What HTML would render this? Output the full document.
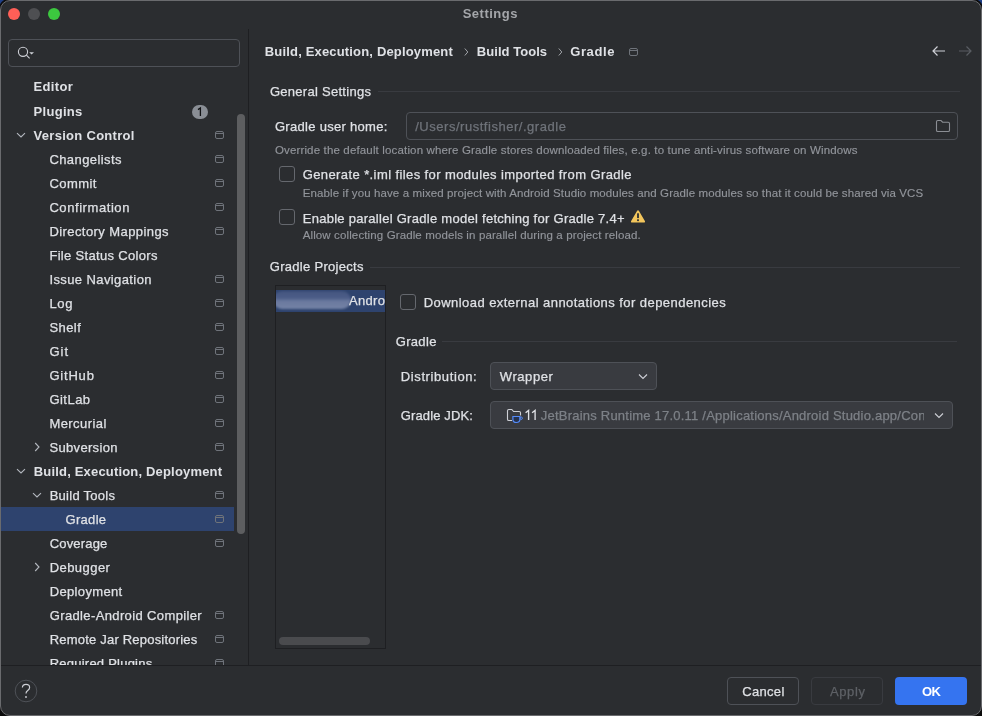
<!DOCTYPE html>
<html><head><meta charset="utf-8">
<style>
html,body{margin:0;padding:0;width:982px;height:716px;overflow:hidden;background:#1d3a78;}
body{position:relative;font-family:"Liberation Sans", sans-serif;}
.ab{position:absolute;display:block;}
.tx{position:absolute;white-space:nowrap;line-height:16px;font-family:"Liberation Sans", sans-serif;-webkit-font-smoothing:antialiased;-webkit-text-stroke:0.25px currentColor;}
body{will-change:transform;}
#win{position:absolute;left:0;top:0;width:980px;height:714px;border:1px solid #6A6B6E;border-radius:10px;background:#2B2D30;overflow:hidden;box-shadow:0 0 0 1.5px #0c0c0c;}
</style></head><body>
<!-- desktop corners -->
<div class="ab" style="left:0;top:0;width:982px;height:358px;background:#1f3f86"></div>
<div class="ab" style="left:0;top:358px;width:982px;height:358px;background:#0a0a0a"></div>
<div id="win"></div>
<!-- traffic lights -->
<div class="ab" style="left:8px;top:8px;width:12px;height:12px;border-radius:50%;background:#FF5F57"></div>
<div class="ab" style="left:28px;top:8px;width:12px;height:12px;border-radius:50%;background:#4E4F52"></div>
<div class="ab" style="left:48px;top:8px;width:12px;height:12px;border-radius:50%;background:#3CC83F"></div>

<!-- search -->
<div class="ab" style="left:8px;top:39px;width:230px;height:26px;border:1px solid #4E5157;border-radius:4px;"></div>
<svg class="ab" style="left:14px;top:42px" width="24" height="20" viewBox="0 0 24 20"><circle cx="9" cy="9.8" r="4.6" fill="none" stroke="#CED0D6" stroke-width="1.1"/><line x1="12.4" y1="13.2" x2="15.6" y2="16.4" stroke="#CED0D6" stroke-width="1.1"/><path d="M15.2 10.2 L20 10.2 L17.6 12.6 Z" fill="#CED0D6"/></svg>

<!-- divider -->
<div class="ab" style="left:248px;top:29px;width:1px;height:636px;background:#1E1F22"></div>
<!-- tree scrollbar -->
<div class="ab" style="left:237px;top:114px;width:8px;height:420px;border-radius:4px;background:#5D5E60"></div>
<!-- selection -->
<div class="ab" style="left:1px;top:507px;width:233px;height:24px;background:#2E436E"></div>
<!-- badge -->
<svg class="ab" style="left:192px;top:105px" width="16" height="14" viewBox="0 0 16 14"><rect x="0" y="0" width="16" height="14" rx="7" fill="#8A8E95"/><path d="M6 4.6 L8.4 3 L8.4 11" fill="none" stroke="#111214" stroke-width="1.3"/></svg>

<div class="ab" style="left:0;top:0;width:248px;height:665px;overflow:hidden"><svg class="ab" style="left:15.899999999999999px;top:130px" width="10" height="10" viewBox="0 0 10 10"><path d="M1 3.2 L5 7 L9 3.2" fill="none" stroke="#B4B8BF" stroke-width="1.1"/></svg>
<svg class="ab" style="left:215px;top:131px" width="9" height="8" viewBox="0 0 9 8"><rect x="0.5" y="0.5" width="8" height="7" rx="1.5" fill="none" stroke="#6F737A" stroke-width="1"/><line x1="0.5" y1="2.5" x2="8.5" y2="2.5" stroke="#6F737A" stroke-width="1"/></svg>
<svg class="ab" style="left:215px;top:155px" width="9" height="8" viewBox="0 0 9 8"><rect x="0.5" y="0.5" width="8" height="7" rx="1.5" fill="none" stroke="#6F737A" stroke-width="1"/><line x1="0.5" y1="2.5" x2="8.5" y2="2.5" stroke="#6F737A" stroke-width="1"/></svg>
<svg class="ab" style="left:215px;top:179px" width="9" height="8" viewBox="0 0 9 8"><rect x="0.5" y="0.5" width="8" height="7" rx="1.5" fill="none" stroke="#6F737A" stroke-width="1"/><line x1="0.5" y1="2.5" x2="8.5" y2="2.5" stroke="#6F737A" stroke-width="1"/></svg>
<svg class="ab" style="left:215px;top:203px" width="9" height="8" viewBox="0 0 9 8"><rect x="0.5" y="0.5" width="8" height="7" rx="1.5" fill="none" stroke="#6F737A" stroke-width="1"/><line x1="0.5" y1="2.5" x2="8.5" y2="2.5" stroke="#6F737A" stroke-width="1"/></svg>
<svg class="ab" style="left:215px;top:227px" width="9" height="8" viewBox="0 0 9 8"><rect x="0.5" y="0.5" width="8" height="7" rx="1.5" fill="none" stroke="#6F737A" stroke-width="1"/><line x1="0.5" y1="2.5" x2="8.5" y2="2.5" stroke="#6F737A" stroke-width="1"/></svg>
<svg class="ab" style="left:215px;top:275px" width="9" height="8" viewBox="0 0 9 8"><rect x="0.5" y="0.5" width="8" height="7" rx="1.5" fill="none" stroke="#6F737A" stroke-width="1"/><line x1="0.5" y1="2.5" x2="8.5" y2="2.5" stroke="#6F737A" stroke-width="1"/></svg>
<svg class="ab" style="left:215px;top:299px" width="9" height="8" viewBox="0 0 9 8"><rect x="0.5" y="0.5" width="8" height="7" rx="1.5" fill="none" stroke="#6F737A" stroke-width="1"/><line x1="0.5" y1="2.5" x2="8.5" y2="2.5" stroke="#6F737A" stroke-width="1"/></svg>
<svg class="ab" style="left:215px;top:323px" width="9" height="8" viewBox="0 0 9 8"><rect x="0.5" y="0.5" width="8" height="7" rx="1.5" fill="none" stroke="#6F737A" stroke-width="1"/><line x1="0.5" y1="2.5" x2="8.5" y2="2.5" stroke="#6F737A" stroke-width="1"/></svg>
<svg class="ab" style="left:215px;top:347px" width="9" height="8" viewBox="0 0 9 8"><rect x="0.5" y="0.5" width="8" height="7" rx="1.5" fill="none" stroke="#6F737A" stroke-width="1"/><line x1="0.5" y1="2.5" x2="8.5" y2="2.5" stroke="#6F737A" stroke-width="1"/></svg>
<svg class="ab" style="left:215px;top:371px" width="9" height="8" viewBox="0 0 9 8"><rect x="0.5" y="0.5" width="8" height="7" rx="1.5" fill="none" stroke="#6F737A" stroke-width="1"/><line x1="0.5" y1="2.5" x2="8.5" y2="2.5" stroke="#6F737A" stroke-width="1"/></svg>
<svg class="ab" style="left:215px;top:395px" width="9" height="8" viewBox="0 0 9 8"><rect x="0.5" y="0.5" width="8" height="7" rx="1.5" fill="none" stroke="#6F737A" stroke-width="1"/><line x1="0.5" y1="2.5" x2="8.5" y2="2.5" stroke="#6F737A" stroke-width="1"/></svg>
<svg class="ab" style="left:215px;top:419px" width="9" height="8" viewBox="0 0 9 8"><rect x="0.5" y="0.5" width="8" height="7" rx="1.5" fill="none" stroke="#6F737A" stroke-width="1"/><line x1="0.5" y1="2.5" x2="8.5" y2="2.5" stroke="#6F737A" stroke-width="1"/></svg>
<svg class="ab" style="left:31.700000000000003px;top:442px" width="10" height="10" viewBox="0 0 10 10"><path d="M3.2 1 L7 5 L3.2 9" fill="none" stroke="#B4B8BF" stroke-width="1.1"/></svg>
<svg class="ab" style="left:215px;top:443px" width="9" height="8" viewBox="0 0 9 8"><rect x="0.5" y="0.5" width="8" height="7" rx="1.5" fill="none" stroke="#6F737A" stroke-width="1"/><line x1="0.5" y1="2.5" x2="8.5" y2="2.5" stroke="#6F737A" stroke-width="1"/></svg>
<svg class="ab" style="left:16.1px;top:466px" width="10" height="10" viewBox="0 0 10 10"><path d="M1 3.2 L5 7 L9 3.2" fill="none" stroke="#B4B8BF" stroke-width="1.1"/></svg>
<svg class="ab" style="left:32.0px;top:490px" width="10" height="10" viewBox="0 0 10 10"><path d="M1 3.2 L5 7 L9 3.2" fill="none" stroke="#B4B8BF" stroke-width="1.1"/></svg>
<svg class="ab" style="left:215px;top:491px" width="9" height="8" viewBox="0 0 9 8"><rect x="0.5" y="0.5" width="8" height="7" rx="1.5" fill="none" stroke="#6F737A" stroke-width="1"/><line x1="0.5" y1="2.5" x2="8.5" y2="2.5" stroke="#6F737A" stroke-width="1"/></svg>
<svg class="ab" style="left:215px;top:515px" width="9" height="8" viewBox="0 0 9 8"><rect x="0.5" y="0.5" width="8" height="7" rx="1.5" fill="none" stroke="#6F737A" stroke-width="1"/><line x1="0.5" y1="2.5" x2="8.5" y2="2.5" stroke="#6F737A" stroke-width="1"/></svg>
<svg class="ab" style="left:215px;top:539px" width="9" height="8" viewBox="0 0 9 8"><rect x="0.5" y="0.5" width="8" height="7" rx="1.5" fill="none" stroke="#6F737A" stroke-width="1"/><line x1="0.5" y1="2.5" x2="8.5" y2="2.5" stroke="#6F737A" stroke-width="1"/></svg>
<svg class="ab" style="left:32.0px;top:562px" width="10" height="10" viewBox="0 0 10 10"><path d="M3.2 1 L7 5 L3.2 9" fill="none" stroke="#B4B8BF" stroke-width="1.1"/></svg>
<svg class="ab" style="left:215px;top:611px" width="9" height="8" viewBox="0 0 9 8"><rect x="0.5" y="0.5" width="8" height="7" rx="1.5" fill="none" stroke="#6F737A" stroke-width="1"/><line x1="0.5" y1="2.5" x2="8.5" y2="2.5" stroke="#6F737A" stroke-width="1"/></svg>
<svg class="ab" style="left:215px;top:635px" width="9" height="8" viewBox="0 0 9 8"><rect x="0.5" y="0.5" width="8" height="7" rx="1.5" fill="none" stroke="#6F737A" stroke-width="1"/><line x1="0.5" y1="2.5" x2="8.5" y2="2.5" stroke="#6F737A" stroke-width="1"/></svg>
<svg class="ab" style="left:215px;top:659px" width="9" height="8" viewBox="0 0 9 8"><rect x="0.5" y="0.5" width="8" height="7" rx="1.5" fill="none" stroke="#6F737A" stroke-width="1"/><line x1="0.5" y1="2.5" x2="8.5" y2="2.5" stroke="#6F737A" stroke-width="1"/></svg><div class="tx" style="left:33.60px;top:78.80px;font-size:13px;color:#DFE1E5;font-weight:bold;-webkit-text-stroke:0;letter-spacing:0.329px;">Editor</div>
<div class="tx" style="left:33.60px;top:103.80px;font-size:13px;color:#DFE1E5;font-weight:bold;-webkit-text-stroke:0;letter-spacing:0.292px;">Plugins</div>
<div class="tx" style="left:33.60px;top:127.80px;font-size:13px;color:#DFE1E5;font-weight:bold;-webkit-text-stroke:0;letter-spacing:0.286px;">Version Control</div>
<div class="tx" style="left:49.40px;top:151.80px;font-size:13px;color:#DFE1E5;letter-spacing:0.427px;">Changelists</div>
<div class="tx" style="left:49.40px;top:175.80px;font-size:13px;color:#DFE1E5;letter-spacing:0.445px;">Commit</div>
<div class="tx" style="left:49.40px;top:199.80px;font-size:13px;color:#DFE1E5;letter-spacing:0.573px;">Confirmation</div>
<div class="tx" style="left:49.40px;top:223.80px;font-size:13px;color:#DFE1E5;letter-spacing:0.424px;">Directory Mappings</div>
<div class="tx" style="left:49.40px;top:247.80px;font-size:13px;color:#DFE1E5;letter-spacing:0.324px;">File Status Colors</div>
<div class="tx" style="left:49.40px;top:271.80px;font-size:13px;color:#DFE1E5;letter-spacing:0.399px;">Issue Navigation</div>
<div class="tx" style="left:49.40px;top:295.80px;font-size:13px;color:#DFE1E5;letter-spacing:0.705px;">Log</div>
<div class="tx" style="left:49.40px;top:319.80px;font-size:13px;color:#DFE1E5;letter-spacing:0.442px;">Shelf</div>
<div class="tx" style="left:49.40px;top:343.80px;font-size:13px;color:#DFE1E5;letter-spacing:0.994px;">Git</div>
<div class="tx" style="left:49.40px;top:367.80px;font-size:13px;color:#DFE1E5;letter-spacing:0.808px;">GitHub</div>
<div class="tx" style="left:49.40px;top:391.80px;font-size:13px;color:#DFE1E5;letter-spacing:0.480px;">GitLab</div>
<div class="tx" style="left:49.40px;top:415.80px;font-size:13px;color:#DFE1E5;letter-spacing:0.443px;">Mercurial</div>
<div class="tx" style="left:49.40px;top:439.80px;font-size:13px;color:#DFE1E5;letter-spacing:0.340px;">Subversion</div>
<div class="tx" style="left:33.80px;top:463.80px;font-size:13px;color:#DFE1E5;font-weight:bold;-webkit-text-stroke:0;letter-spacing:0.175px;">Build, Execution, Deployment</div>
<div class="tx" style="left:49.70px;top:487.80px;font-size:13px;color:#DFE1E5;letter-spacing:0.263px;">Build Tools</div>
<div class="tx" style="left:65.50px;top:511.80px;font-size:13px;color:#DFE1E5;letter-spacing:0.316px;">Gradle</div>
<div class="tx" style="left:49.70px;top:535.80px;font-size:13px;color:#DFE1E5;letter-spacing:0.176px;">Coverage</div>
<div class="tx" style="left:49.70px;top:559.80px;font-size:13px;color:#DFE1E5;letter-spacing:0.443px;">Debugger</div>
<div class="tx" style="left:49.70px;top:583.80px;font-size:13px;color:#DFE1E5;letter-spacing:0.348px;">Deployment</div>
<div class="tx" style="left:49.70px;top:607.80px;font-size:13px;color:#DFE1E5;letter-spacing:0.374px;">Gradle-Android Compiler</div>
<div class="tx" style="left:49.70px;top:631.80px;font-size:13px;color:#DFE1E5;letter-spacing:0.206px;">Remote Jar Repositories</div>
<div class="tx" style="left:49.70px;top:655.80px;font-size:13px;color:#DFE1E5;letter-spacing:0.233px;">Required Plugins</div></div>

<!-- breadcrumb separators -->
<svg class="ab" style="left:462px;top:47px" width="8" height="10" viewBox="0 0 8 10"><path d="M2.8 1.5 L5.8 5 L2.8 8.5" fill="none" stroke="#A0A3A8" stroke-width="1"/></svg>
<svg class="ab" style="left:556px;top:47px" width="8" height="10" viewBox="0 0 8 10"><path d="M2.8 1.5 L5.8 5 L2.8 8.5" fill="none" stroke="#A0A3A8" stroke-width="1"/></svg>
<svg class="ab" style="left:629px;top:48px" width="9" height="8" viewBox="0 0 9 8"><rect x="0.5" y="0.5" width="8" height="7" rx="1.5" fill="none" stroke="#6F737A"/><line x1="0.5" y1="2.5" x2="8.5" y2="2.5" stroke="#6F737A"/></svg>
<!-- nav arrows -->
<svg class="ab" style="left:931px;top:45px" width="16" height="12" viewBox="0 0 16 12"><path d="M6.5 1.5 L2 6 L6.5 10.5 M2 6 L14 6" fill="none" stroke="#CED0D6" stroke-width="1.2"/></svg>
<svg class="ab" style="left:957px;top:45px" width="16" height="12" viewBox="0 0 16 12"><path d="M9.5 1.5 L14 6 L9.5 10.5 M14 6 L2 6" fill="none" stroke="#5A5D63" stroke-width="1.2"/></svg>

<!-- General settings separator -->
<div class="ab" style="left:378px;top:91px;width:582px;height:1px;background:#393B40"></div>
<!-- text field -->
<div class="ab" style="left:406px;top:112px;width:550px;height:26px;border:1px solid #4E5157;border-radius:4px;"></div>
<svg class="ab" style="left:935px;top:119px" width="16" height="14" viewBox="0 0 16 14"><path d="M1.5 2.8 Q1.5 1.5 2.8 1.5 L6 1.5 L7.6 3.2 L13.2 3.2 Q14.5 3.2 14.5 4.5 L14.5 11.2 Q14.5 12.5 13.2 12.5 L2.8 12.5 Q1.5 12.5 1.5 11.2 Z" fill="none" stroke="#8B8E94" stroke-width="1.1"/></svg>

<!-- checkboxes -->
<div class="ab" style="left:279px;top:166px;width:14px;height:14px;border:1px solid #65686E;border-radius:3px;"></div>
<div class="ab" style="left:279px;top:209px;width:14px;height:14px;border:1px solid #65686E;border-radius:3px;"></div>
<!-- warning -->
<svg class="ab" style="left:630px;top:209px" width="16" height="15" viewBox="0 0 16 15"><path d="M8 1.2 Q8.6 1.2 9 1.9 L15 12.3 Q15.4 13.5 14.2 13.6 L1.8 13.6 Q0.6 13.5 1 12.3 L7 1.9 Q7.4 1.2 8 1.2 Z" fill="#F2C55C"/><rect x="7.1" y="4.3" width="1.8" height="4.8" fill="#2B2D30"/><rect x="7.1" y="10.3" width="1.8" height="1.8" fill="#2B2D30"/></svg>

<!-- Gradle Projects separator -->
<div class="ab" style="left:370px;top:267px;width:590px;height:1px;background:#393B40"></div>
<!-- list box -->
<div class="ab" style="left:275px;top:285px;width:109px;height:362px;border:1px solid #1E1F22;"></div>
<div class="ab" style="left:276px;top:290px;width:109px;height:22px;background:#2E436E;overflow:hidden;">
  <div class="ab" style="left:-3px;top:1px;width:78px;height:18px;border-radius:9px;background:linear-gradient(to bottom,#44557F 0%,#4C5D88 40%,#6A789E 55%,#7483A6 100%);filter:blur(0.8px)"></div>
  <div class="tx" style="left:73px;top:3px;font-size:13px;color:#DFE1E5;letter-spacing:0.3px">Andro</div>
</div>
<div class="ab" style="left:279px;top:637px;width:91px;height:8px;border-radius:4px;background:#4A4B4E"></div>

<!-- download checkbox -->
<div class="ab" style="left:400px;top:294px;width:14px;height:14px;border:1px solid #65686E;border-radius:3px;"></div>
<!-- Gradle sub separator -->
<div class="ab" style="left:442px;top:341px;width:515px;height:1px;background:#393B40"></div>
<!-- combos -->
<div class="ab" style="left:490px;top:362px;width:165px;height:26px;border:1px solid #4E5157;border-radius:4px;background:#393B40"></div>
<svg class="ab" style="left:637px;top:372px" width="12" height="10" viewBox="0 0 12 10"><path d="M2 2.5 L6 6.5 L10 2.5" fill="none" stroke="#CED0D6" stroke-width="1.1"/></svg>
<div class="ab" style="left:490px;top:401px;width:461px;height:26px;border:1px solid #4E5157;border-radius:4px;background:#393B40"></div>
<svg class="ab" style="left:933px;top:411px" width="12" height="10" viewBox="0 0 12 10"><path d="M2 2.5 L6 6.5 L10 2.5" fill="none" stroke="#CED0D6" stroke-width="1.1"/></svg>
<svg class="ab" style="left:506px;top:408px" width="18" height="16" viewBox="0 0 18 16"><path d="M6 12.5 L2.8 12.5 Q1.5 12.5 1.5 11.2 L1.5 2.8 Q1.5 1.5 2.8 1.5 L5.8 1.5 L7.6 3.5 L13.2 3.5 Q14.5 3.5 14.5 4.8 L14.5 7.5" fill="#393B40" stroke="#CED0D6" stroke-width="1.1"/><path d="M6.9 8.5 L13.9 8.5 L13.9 11.3 Q13.9 14.5 10.4 14.5 Q6.9 14.5 6.9 11.3 Z" fill="#25324D" stroke="#548AF7" stroke-width="1.2"/><circle cx="15.2" cy="10.2" r="1.2" fill="none" stroke="#548AF7" stroke-width="1"/></svg>
<svg class="ab" style="left:524px;top:408px" width="16" height="14" viewBox="0 0 16 14"><path d="M1.6 4.8 L4.6 2.4 L4.6 12 M8.1 4.8 L11.1 2.4 L11.1 12" fill="none" stroke="#DFE1E5" stroke-width="1.35"/></svg>
<div class="ab" style="left:524px;top:404px;width:400px;height:22px;overflow:hidden;">
  <div class="tx" style="left:16.8px;top:3.5px;font-size:13px;color:#7D8187;letter-spacing:0.22px">JetBrains Runtime 17.0.11 /Applications/Android Studio.app/Contents/jbr/Contents/Home</div>
</div>

<!-- bottom separator -->
<div class="ab" style="left:1px;top:665px;width:980px;height:1px;background:#1E1F22"></div>
<!-- help -->
<svg class="ab" style="left:14px;top:679px" width="24" height="24" viewBox="0 0 24 24"><circle cx="12" cy="12" r="10.8" fill="none" stroke="#4E5157" stroke-width="1"/><path d="M8.4 8.6 Q8.4 5.4 12 5.4 Q15.6 5.4 15.6 8.4 Q15.6 10.2 13.7 11.4 Q12 12.5 12 14.6" fill="none" stroke="#CED0D6" stroke-width="1.2"/><circle cx="12" cy="18" r="0.9" fill="#CED0D6"/></svg>
<!-- buttons -->
<div class="ab" style="left:727px;top:677px;width:70px;height:26px;border:1px solid #4E5157;border-radius:4px;"></div>
<div class="ab" style="left:811px;top:677px;width:70px;height:26px;border:1px solid #393B40;border-radius:4px;"></div>
<div class="ab" style="left:895px;top:677px;width:72px;height:28px;border-radius:4px;background:#3574F0"></div>

<div class="tx" style="left:462.70px;top:5.90px;font-size:13px;color:#A4A6AA;font-weight:bold;-webkit-text-stroke:0;letter-spacing:0.502px;">Settings</div>
<div class="tx" style="left:264.80px;top:43.50px;font-size:13px;color:#DFE1E5;font-weight:bold;-webkit-text-stroke:0;letter-spacing:0.168px;">Build, Execution, Deployment</div>
<div class="tx" style="left:476.80px;top:43.50px;font-size:13px;color:#DFE1E5;font-weight:bold;-webkit-text-stroke:0;letter-spacing:0.049px;">Build Tools</div>
<div class="tx" style="left:570.20px;top:43.50px;font-size:13px;color:#DFE1E5;font-weight:bold;-webkit-text-stroke:0;letter-spacing:0.623px;">Gradle</div>
<div class="tx" style="left:269.90px;top:83.60px;font-size:13px;color:#DFE1E5;letter-spacing:0.278px;">General Settings</div>
<div class="tx" style="left:274.90px;top:119.10px;font-size:13px;color:#DFE1E5;letter-spacing:0.302px;">Gradle user home:</div>
<div class="tx" style="left:415.20px;top:119.10px;font-size:13px;color:#6F737A;letter-spacing:0.530px;">/Users/rustfisher/.gradle</div>
<div class="tx" style="left:274.90px;top:141.62px;font-size:11.5px;color:#92959B;-webkit-text-stroke:0.15px currentColor;letter-spacing:0.154px;">Override the default location where Gradle stores downloaded files, e.g. to tune anti-virus software on Windows</div>
<div class="tx" style="left:302.70px;top:167.40px;font-size:13px;color:#DFE1E5;letter-spacing:0.404px;">Generate *.iml files for modules imported from Gradle</div>
<div class="tx" style="left:302.70px;top:184.62px;font-size:11.5px;color:#92959B;-webkit-text-stroke:0.15px currentColor;letter-spacing:0.115px;">Enable if you have a mixed project with Android Studio modules and Gradle modules so that it could be shared via VCS</div>
<div class="tx" style="left:302.70px;top:210.70px;font-size:13px;color:#DFE1E5;letter-spacing:0.277px;">Enable parallel Gradle model fetching for Gradle 7.4+</div>
<div class="tx" style="left:302.70px;top:227.32px;font-size:11.5px;color:#92959B;-webkit-text-stroke:0.15px currentColor;letter-spacing:0.125px;">Allow collecting Gradle models in parallel during a project reload.</div>
<div class="tx" style="left:269.80px;top:259.40px;font-size:13px;color:#DFE1E5;letter-spacing:0.294px;">Gradle Projects</div>
<div class="tx" style="left:423.70px;top:295.00px;font-size:13px;color:#DFE1E5;letter-spacing:0.448px;">Download external annotations for dependencies</div>
<div class="tx" style="left:395.70px;top:333.50px;font-size:13px;color:#DFE1E5;letter-spacing:0.336px;">Gradle</div>
<div class="tx" style="left:400.80px;top:369.30px;font-size:13px;color:#DFE1E5;letter-spacing:0.605px;">Distribution:</div>
<div class="tx" style="left:499.80px;top:368.70px;font-size:13px;color:#DFE1E5;letter-spacing:0.564px;">Wrapper</div>
<div class="tx" style="left:400.80px;top:408.00px;font-size:13px;color:#DFE1E5;letter-spacing:0.120px;">Gradle JDK:</div>
<div class="tx" style="left:742.30px;top:684.00px;font-size:13px;color:#DFE1E5;letter-spacing:0.307px;">Cancel</div>
<div class="tx" style="left:829.90px;top:684.00px;font-size:13px;color:#5E6166;letter-spacing:0.620px;">Apply</div>
<div class="tx" style="left:921.90px;top:684.00px;font-size:13px;color:#FFFFFF;font-weight:bold;-webkit-text-stroke:0;letter-spacing:-0.500px;">OK</div>
</body></html>
